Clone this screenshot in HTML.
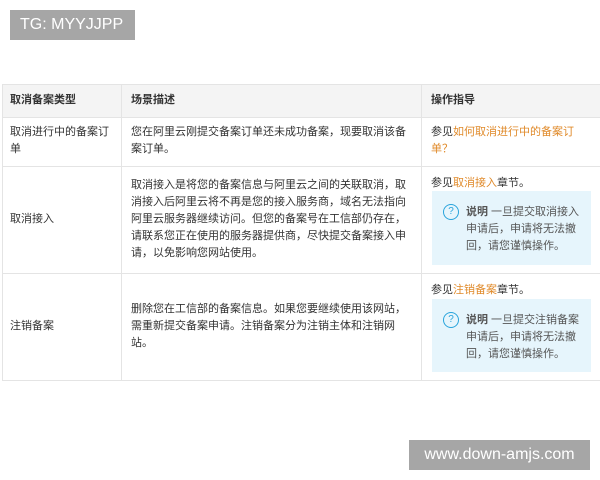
<!DOCTYPE html>
<html><head><meta charset="utf-8"><style>
body{margin:0;width:600px;height:480px;background:#fff;position:relative;overflow:hidden;font-family:"Liberation Sans","Noto Sans CJK SC",sans-serif;font-size:11px;color:#333;}
.a{position:absolute;line-height:17px;}
.h{font-weight:bold;color:#333}
.l{position:absolute;background:#e4e4e4}
.o{color:#e08a2a}
.note{position:absolute;background:#e6f5fc;left:432px;width:159px;}
.q{position:absolute;left:11px;width:14px;height:14px;border:1px solid #29a4dc;border-radius:50%;color:#29a4dc;font-size:10px;line-height:14px;text-align:center}
.nt{position:absolute;left:34px;width:120px;line-height:17px;color:#555}
.wm{position:absolute;background:#a6a6a6;color:#fff;}
</style></head><body>
<div class="wm" style="left:10px;top:10px;width:125px;height:30px;font-size:16px;line-height:30px;padding-left:10px;box-sizing:border-box">TG: MYYJJPP</div>
<div style="position:absolute;left:2px;top:84px;width:598px;height:33px;background:#f4f4f4"></div>
<div class="l" style="left:2px;top:84px;width:598px;height:1px"></div>
<div class="l" style="left:2px;top:117px;width:598px;height:1px"></div>
<div class="l" style="left:2px;top:166px;width:598px;height:1px"></div>
<div class="l" style="left:2px;top:273px;width:598px;height:1px"></div>
<div class="l" style="left:2px;top:380px;width:598px;height:1px"></div>
<div class="l" style="left:121px;top:84px;width:1px;height:296px"></div>
<div class="l" style="left:421px;top:84px;width:1px;height:296px"></div>
<div class="l" style="left:2px;top:84px;width:1px;height:296px"></div>
<div class="a h" style="left:10px;top:92px">取消备案类型</div>
<div class="a h" style="left:131px;top:92px">场景描述</div>
<div class="a h" style="left:431px;top:92px">操作指导</div>
<div class="a" style="left:10px;top:124px;width:106px">取消进行中的备案订单</div>
<div class="a" style="left:131px;top:124px;width:280px">您在阿里云刚提交备案订单还未成功备案，现要取消该备案订单。</div>
<div class="a" style="left:431px;top:124px;width:150px">参见<span class="o">如何取消进行中的备案订单？</span></div>
<div class="a" style="left:10px;top:211px">取消接入</div>
<div class="a" style="left:131px;top:177px;width:280px">取消接入是将您的备案信息与阿里云之间的关联取消，取消接入后阿里云将不再是您的接入服务商，域名无法指向阿里云服务器继续访问。但您的备案号在工信部仍存在，请联系您正在使用的服务器提供商，尽快提交备案接入申请，以免影响您网站使用。</div>
<div class="a" style="left:431px;top:175px">参见<span class="o">取消接入</span>章节。</div>
<div class="note" style="top:191px;height:74px"><div class="q" style="top:13px">?</div><div class="nt" style="top:13px"><b>说明</b> 一旦提交取消接入申请后，申请将无法撤回，请您谨慎操作。</div></div>
<div class="a" style="left:10px;top:318px">注销备案</div>
<div class="a" style="left:131px;top:301px;width:280px">删除您在工信部的备案信息。如果您要继续使用该网站，需重新提交备案申请。注销备案分为注销主体和注销网站。</div>
<div class="a" style="left:431px;top:282px">参见<span class="o">注销备案</span>章节。</div>
<div class="note" style="top:299px;height:73px"><div class="q" style="top:13px">?</div><div class="nt" style="top:13px"><b>说明</b> 一旦提交注销备案申请后，申请将无法撤回，请您谨慎操作。</div></div>
<div class="wm" style="left:409px;top:440px;width:181px;height:30px;font-size:16px;line-height:30px;text-align:center">www.down-amjs.com</div>
</body></html>
